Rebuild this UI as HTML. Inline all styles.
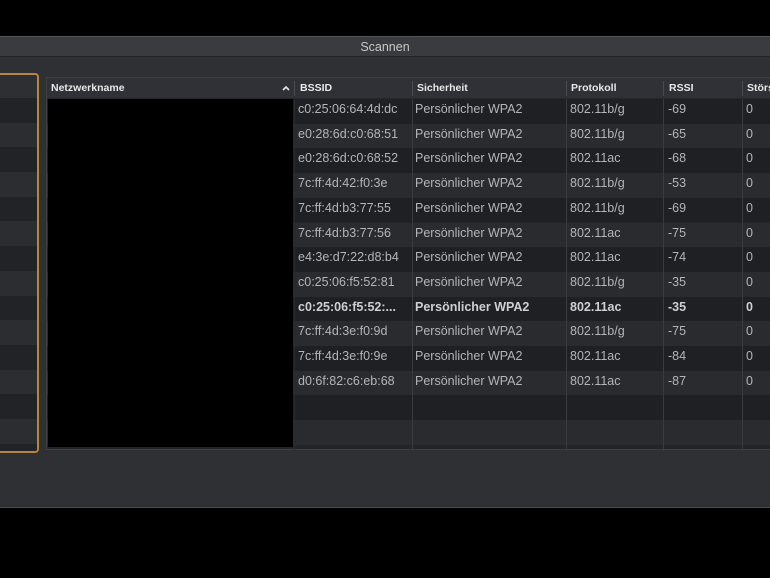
<!DOCTYPE html>
<html><head><meta charset="utf-8"><style>
*{margin:0;padding:0;box-sizing:border-box}
body{width:770px;height:578px;background:#000;position:relative;overflow:hidden;font-family:"Liberation Sans",sans-serif;}
.title{position:absolute;left:0;top:36px;width:770px;height:21px;background:#3a3b3f;border-top:1px solid #55565a;border-bottom:1px solid #232427;color:#c8c8ca;font-size:12.5px;text-align:center;line-height:20px}
.win{position:absolute;left:0;top:57px;width:770px;height:451px;background:#2f3034;border-bottom:1px solid #4a4b4f}
.left{position:absolute;left:-4px;top:73px;width:43px;height:380px;border:2px solid #b8843f;border-radius:4px;overflow:hidden}
.lr{height:24.7px}
.tbl{position:absolute;left:46px;top:77px;width:730px;height:373px;background:#232428;border:1px solid #3e3f43}
.hdr{position:absolute;left:0;top:0;width:730px;height:21px;background:#303136;border-bottom:1px solid #26272a;color:#e8e8ea;font-size:10.5px;font-weight:bold}
.hdr span{position:absolute;top:4px}
.hdr i{position:absolute;top:3px;width:1px;height:15px;background:#4a4b50}
.row{position:absolute;left:0;width:730px;height:24.7px;color:#b5b5b8;font-size:12.5px}
.row span{position:absolute;top:3px;white-space:nowrap}
.row.sel{font-weight:bold;color:#cfcfd2}
.vl{position:absolute;top:21px;width:1px;height:352px;background:#3a3b3f}
.black{position:absolute;left:1px;top:21px;width:245px;height:348px;background:#000}
</style></head><body>
<div class="title">Scannen</div>
<div class="win"></div>
<div class="left">
<div class="lr" style="background:#2e2f33;height:23px"></div>
<div class="lr" style="background:#222327"></div><div class="lr" style="background:#2c2d31"></div>
<div class="lr" style="background:#222327"></div><div class="lr" style="background:#2c2d31"></div>
<div class="lr" style="background:#222327"></div><div class="lr" style="background:#2c2d31"></div>
<div class="lr" style="background:#222327"></div><div class="lr" style="background:#2c2d31"></div>
<div class="lr" style="background:#222327"></div><div class="lr" style="background:#2c2d31"></div>
<div class="lr" style="background:#222327"></div><div class="lr" style="background:#2c2d31"></div>
<div class="lr" style="background:#222327"></div><div class="lr" style="background:#2c2d31"></div>
<div class="lr" style="background:#222327"></div><div class="lr" style="background:#2c2d31"></div>
</div>
<div class="tbl">
<div id="rows"></div>
<div class="black"></div>
<div class="vl" style="left:247px;background:#2a2b2f"></div>
<div class="vl" style="left:365px"></div>
<div class="vl" style="left:519px"></div>
<div class="vl" style="left:616px"></div>
<div class="vl" style="left:695px"></div>
<div class="hdr">
<span style="left:4px">Netzwerkname</span>
<svg style="position:absolute;left:235px;top:7px" width="8" height="6" viewBox="0 0 8 6"><path d="M1 5 L4 2 L7 5" stroke="#e8e8ea" stroke-width="1.6" fill="none"/></svg>
<i style="left:247px"></i><span style="left:253px">BSSID</span>
<i style="left:365px"></i><span style="left:370px">Sicherheit</span>
<i style="left:519px"></i><span style="left:524px">Protokoll</span>
<i style="left:616px"></i><span style="left:622px">RSSI</span>
<i style="left:695px"></i><span style="left:700px">Störs</span>
</div>
</div>
<script>
var d=[["c0:25:06:64:4d:dc","802.11b/g","-69"],["e0:28:6d:c0:68:51","802.11b/g","-65"],["e0:28:6d:c0:68:52","802.11ac","-68"],["7c:ff:4d:42:f0:3e","802.11b/g","-53"],["7c:ff:4d:b3:77:55","802.11b/g","-69"],["7c:ff:4d:b3:77:56","802.11ac","-75"],["e4:3e:d7:22:d8:b4","802.11ac","-74"],["c0:25:06:f5:52:81","802.11b/g","-35"],["c0:25:06:f5:52:...","802.11ac","-35"],["7c:ff:4d:3e:f0:9d","802.11b/g","-75"],["7c:ff:4d:3e:f0:9e","802.11ac","-84"],["d0:6f:82:c6:eb:68","802.11ac","-87"],null,null];
var h="";for(var i=0;i<d.length;i++){var t=21+i*24.7;var bg=i%2?"#2a2b2f":"#1f2024";var r=d[i];
h+='<div class="row'+(i==8?' sel':'')+'" style="top:'+t+'px;background:'+bg+';'+(t+24.7>372?'height:'+(372-t)+'px;':'')+'">';
if(r)h+='<span style="left:251px">'+r[0]+'</span><span style="left:368px">Persönlicher WPA2</span><span style="left:523px">'+r[1]+'</span><span style="left:621px">'+r[2]+'</span><span style="left:699px">0</span>';
h+='</div>';}
document.getElementById("rows").innerHTML=h;
</script>
</body></html>
